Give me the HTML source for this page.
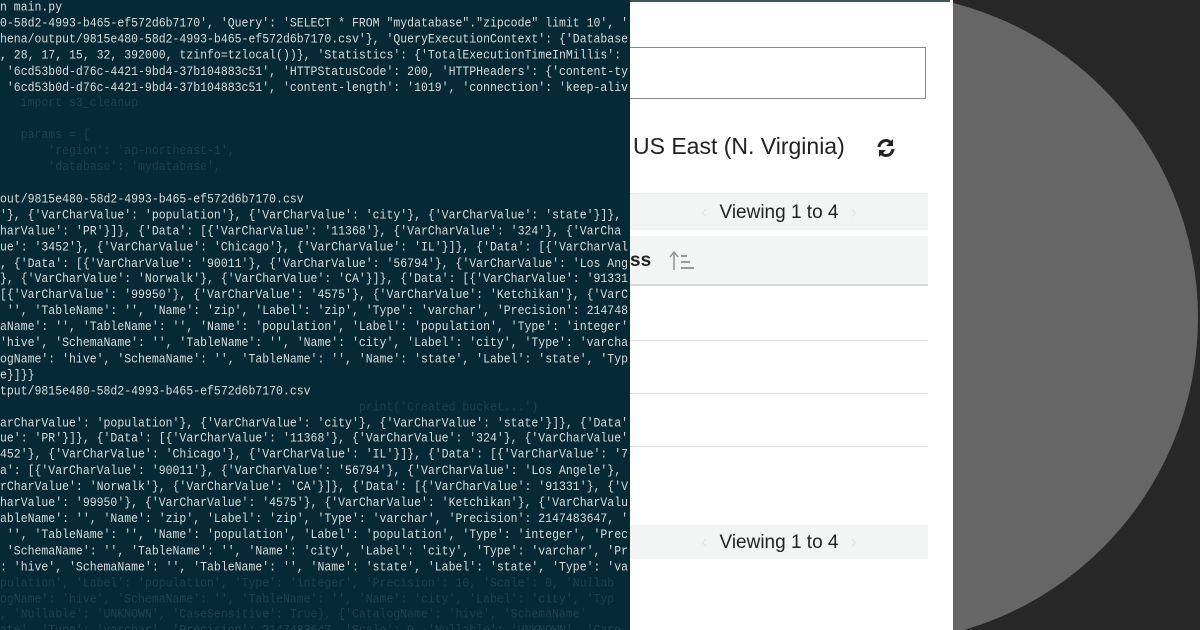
<!DOCTYPE html>
<html><head><meta charset="utf-8"><style>
html,body{margin:0;padding:0;width:1200px;height:630px;overflow:hidden;background:#272727;position:relative}
#code{position:absolute;left:0;top:0;width:630px;height:630px;background:#062a35;overflow:hidden;z-index:2}
#code pre{margin:0;position:absolute;left:0;top:0;font-family:"Liberation Mono",monospace;font-size:11.5px;line-height:13.9px;color:#d5dcde;white-space:pre;transform:scaleY(1.15);transform-origin:0 0}
.f{color:#1d4250}
#cwrap{position:absolute;left:953px;top:0;width:247px;height:630px;overflow:hidden;z-index:1}
#circle{position:absolute;left:-405px;top:-7px;width:650px;height:650px;border-radius:50%;background:#666}
#panel{position:absolute;left:630px;top:0;width:323px;height:630px;background:#fff;overflow:hidden;font-family:"Liberation Sans",sans-serif;color:#222;z-index:2}
.topline{position:absolute;left:0;top:0;width:320px;height:2px;background:#44555c}
.input{position:absolute;left:-2px;top:47px;width:298px;height:52px;border:1px solid #888;box-sizing:border-box}
.region{position:absolute;left:3px;top:133px;font-size:23px;white-space:nowrap}
.bar{position:absolute;left:0;width:298px;background:#f3f5f5;text-align:center;font-size:19px}
.row{position:absolute;left:0;width:298px;height:1px;background:#ddd}
</style></head><body>
<div id="code"><pre>n main.py
0-58d2-4993-b465-ef572d6b7170', 'Query': 'SELECT * FROM "mydatabase"."zipcode" limit 10', '
hena/output/9815e480-58d2-4993-b465-ef572d6b7170.csv'}, 'QueryExecutionContext': {'Database
, 28, 17, 15, 32, 392000, tzinfo=tzlocal())}, 'Statistics': {'TotalExecutionTimeInMillis':
 '6cd53b0d-d76c-4421-9bd4-37b104883c51', 'HTTPStatusCode': 200, 'HTTPHeaders': {'content-ty
 '6cd53b0d-d76c-4421-9bd4-37b104883c51', 'content-length': '1019', 'connection': 'keep-aliv
<span class="f">   import s3_cleanup</span>

<span class="f">   params = {</span>
<span class="f">       'region': 'ap-northeast-1',</span>
<span class="f">       'database': 'mydatabase',</span>

out/9815e480-58d2-4993-b465-ef572d6b7170.csv
'}, {'VarCharValue': 'population'}, {'VarCharValue': 'city'}, {'VarCharValue': 'state'}]},
harValue': 'PR'}]}, {'Data': [{'VarCharValue': '11368'}, {'VarCharValue': '324'}, {'VarCha
ue': '3452'}, {'VarCharValue': 'Chicago'}, {'VarCharValue': 'IL'}]}, {'Data': [{'VarCharVal
, {'Data': [{'VarCharValue': '90011'}, {'VarCharValue': '56794'}, {'VarCharValue': 'Los Ang
}, {'VarCharValue': 'Norwalk'}, {'VarCharValue': 'CA'}]}, {'Data': [{'VarCharValue': '91331
[{'VarCharValue': '99950'}, {'VarCharValue': '4575'}, {'VarCharValue': 'Ketchikan'}, {'VarC
 '', 'TableName': '', 'Name': 'zip', 'Label': 'zip', 'Type': 'varchar', 'Precision': 214748
aName': '', 'TableName': '', 'Name': 'population', 'Label': 'population', 'Type': 'integer'
'hive', 'SchemaName': '', 'TableName': '', 'Name': 'city', 'Label': 'city', 'Type': 'varcha
ogName': 'hive', 'SchemaName': '', 'TableName': '', 'Name': 'state', 'Label': 'state', 'Typ
e}]}}
tput/9815e480-58d2-4993-b465-ef572d6b7170.csv
<span class="f">                                                    print('Created bucket...')</span>
arCharValue': 'population'}, {'VarCharValue': 'city'}, {'VarCharValue': 'state'}]}, {'Data'
ue': 'PR'}]}, {'Data': [{'VarCharValue': '11368'}, {'VarCharValue': '324'}, {'VarCharValue'
452'}, {'VarCharValue': 'Chicago'}, {'VarCharValue': 'IL'}]}, {'Data': [{'VarCharValue': '7
a': [{'VarCharValue': '90011'}, {'VarCharValue': '56794'}, {'VarCharValue': 'Los Angele'},
rCharValue': 'Norwalk'}, {'VarCharValue': 'CA'}]}, {'Data': [{'VarCharValue': '91331'}, {'V
harValue': '99950'}, {'VarCharValue': '4575'}, {'VarCharValue': 'Ketchikan'}, {'VarCharValu
ableName': '', 'Name': 'zip', 'Label': 'zip', 'Type': 'varchar', 'Precision': 2147483647, '
 '', 'TableName': '', 'Name': 'population', 'Label': 'population', 'Type': 'integer', 'Prec
 'SchemaName': '', 'TableName': '', 'Name': 'city', 'Label': 'city', 'Type': 'varchar', 'Pr
: 'hive', 'SchemaName': '', 'TableName': '', 'Name': 'state', 'Label': 'state', 'Type': 'va
<span class="f">pulation', 'Label': 'population', 'Type': 'integer', 'Precision': 10, 'Scale': 0, 'Nullab</span>
<span class="f">ogName': 'hive', 'SchemaName': '', 'TableName': '', 'Name': 'city', 'Label': 'city', 'Typ</span>
<span class="f">, 'Nullable': 'UNKNOWN', 'CaseSensitive': True}, {'CatalogName': 'hive', 'SchemaName'</span>
<span class="f">ate', 'Type': 'varchar', 'Precision': 2147483647, 'Scale': 0, 'Nullable': 'UNKNOWN', 'Case</span>
</pre></div>
<div id="cwrap"><div id="circle"></div></div>
<div id="panel">
<div class="topline"></div>
<div class="input"></div>
<div class="region">US East (N. Virginia)</div>
<svg style="position:absolute;left:246px;top:138px" width="20" height="20" viewBox="0 0 20 20"><path d="M3 9 A7 7 0 0 1 16 6" stroke="#222" stroke-width="3" fill="none"/><path d="M17 1 L17 8 L10 8 Z" fill="#222"/><path d="M17 11 A7 7 0 0 1 4 14" stroke="#222" stroke-width="3" fill="none"/><path d="M3 19 L3 12 L10 12 Z" fill="#222"/></svg>
<div class="bar" style="top:193px;height:36px;line-height:38px;border-top:1px solid #e8eaea"><span style="color:#e4e6e6;margin-right:12px">‹</span>Viewing 1 to 4<span style="color:#e4e6e6;margin-left:12px">›</span></div>
<div class="bar" style="top:236px;height:48px;border-bottom:2px solid #d8d8d8;text-align:left"><span style="position:absolute;left:0;top:14px;font-weight:bold;font-size:19px">ss</span>
<svg style="position:absolute;left:38px;top:14px" width="28" height="22" viewBox="0 0 28 22"><path d="M6 20 V3 M2 7 L6 2 L10 7" stroke="#999" stroke-width="1.6" fill="none"/><path d="M13 6 H19 M13 12 H22 M13 18 H26" stroke="#999" stroke-width="2" fill="none"/></svg></div>
<div class="row" style="top:340px"></div>
<div class="row" style="top:393px"></div>
<div class="row" style="top:446px"></div>
<div class="bar" style="top:525px;height:34px;line-height:36px"><span style="color:#e4e6e6;margin-right:12px">‹</span>Viewing 1 to 4<span style="color:#e4e6e6;margin-left:12px">›</span></div>
</div>
</body></html>
